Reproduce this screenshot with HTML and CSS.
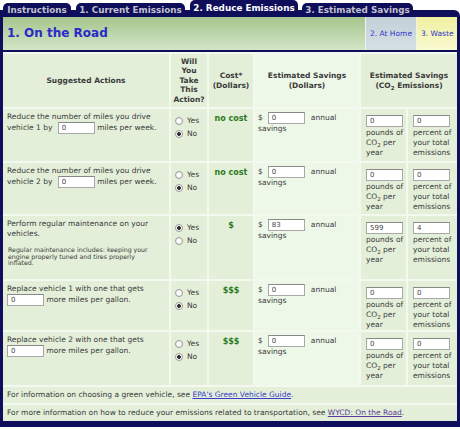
FILE: index.html
```html
<!DOCTYPE html>
<html>
<head>
<meta charset="utf-8">
<title>Reduce Emissions</title>
<link rel="stylesheet" href="styles.css">
</head>
<body>
<div class="calc">
  <div class="tabs">
    <div class="tab t1">Instructions</div>
    <div class="tab t2">1. Current Emissions</div>
    <div class="tab t3 active">2. Reduce Emissions</div>
    <div class="tab t4">3. Estimated Savings</div>
    <div class="tab-fill"></div>
  </div>
  <div class="frame">
    <div class="band">
      <h1 class="title">1. On the Road</h1>
      <a class="sub home">2. At Home</a>
      <a class="sub waste">3. Waste</a>
    </div>
    <div class="grid">
      <div class="c head"><span>Suggested Actions</span></div>
      <div class="c head"><span>Will<br>You<br>Take<br>This<br>Action?</span></div>
      <div class="c head"><span>Cost*<br>(Dollars)</span></div>
      <div class="c head sav"><span>Estimated Savings<br>(Dollars)</span></div>
      <div class="c head span2"><span>Estimated Savings<br>(CO<sub>2</sub> Emissions)</span></div>

      <div class="c act">Reduce the number of miles you drive vehicle 1 by <input class="num gap" value="0"> miles per week.</div>
      <div class="c radios"><label><input type="radio" name="r1"> Yes</label><label><input type="radio" name="r1" checked> No</label></div>
      <div class="c cost">no cost</div>
      <div class="c sav money">$<input class="num" value="0">annual savings</div>
      <div class="c co2"><input class="num" value="0"><span>pounds of<br>CO<sub>2</sub> per<br>year</span></div>
      <div class="c co2"><input class="num" value="0"><span>percent of<br>your total<br>emissions</span></div>

      <div class="c act">Reduce the number of miles you drive vehicle 2 by <input class="num gap" value="0"> miles per week.</div>
      <div class="c radios"><label><input type="radio" name="r2"> Yes</label><label><input type="radio" name="r2" checked> No</label></div>
      <div class="c cost">no cost</div>
      <div class="c sav money">$<input class="num" value="0">annual savings</div>
      <div class="c co2"><input class="num" value="0"><span>pounds of<br>CO<sub>2</sub> per<br>year</span></div>
      <div class="c co2"><input class="num" value="0"><span>percent of<br>your total<br>emissions</span></div>

      <div class="c act">Perform regular maintenance on your vehicles.<p class="note">Regular maintenance includes: keeping your engine properly tuned and tires properly inflated.</p></div>
      <div class="c radios"><label><input type="radio" name="r3" checked> Yes</label><label><input type="radio" name="r3"> No</label></div>
      <div class="c cost">$</div>
      <div class="c sav money">$<input class="num" value="83">annual savings</div>
      <div class="c co2"><input class="num" value="599"><span>pounds of<br>CO<sub>2</sub> per<br>year</span></div>
      <div class="c co2"><input class="num" value="4"><span>percent of<br>your total<br>emissions</span></div>

      <div class="c act">Replace vehicle 1 with one that gets <input class="num" value="0"> more miles per gallon.</div>
      <div class="c radios"><label><input type="radio" name="r4"> Yes</label><label><input type="radio" name="r4" checked> No</label></div>
      <div class="c cost">$$$</div>
      <div class="c sav money">$<input class="num" value="0">annual savings</div>
      <div class="c co2"><input class="num" value="0"><span>pounds of<br>CO<sub>2</sub> per<br>year</span></div>
      <div class="c co2"><input class="num" value="0"><span>percent of<br>your total<br>emissions</span></div>

      <div class="c act">Replace vehicle 2 with one that gets <input class="num" value="0"> more miles per gallon.</div>
      <div class="c radios"><label><input type="radio" name="r5"> Yes</label><label><input type="radio" name="r5" checked> No</label></div>
      <div class="c cost">$$$</div>
      <div class="c sav money">$<input class="num" value="0">annual savings</div>
      <div class="c co2"><input class="num" value="0"><span>pounds of<br>CO<sub>2</sub> per<br>year</span></div>
      <div class="c co2"><input class="num" value="0"><span>percent of<br>your total<br>emissions</span></div>

      <div class="c foot"><span>For information on choosing a green vehicle, see <a class="link">EPA's Green Vehicle Guide</a>.</span></div>
      <div class="c foot"><span>For more information on how to reduce your emissions related to transportation, see <a class="link visited">WYCD: On the Road</a>.</span></div>
    </div>
  </div>
</div>
</body>
</html>
```

FILE: styles.css
```css
* { box-sizing: border-box; }
body {
  margin: 0;
  background: #fff;
  font-family: "DejaVu Sans", Verdana, sans-serif;
  font-size: 7.5px;
  color: #3a3a3a;
}
.calc { width: 460px; }

/* tabs */
.tabs {
  display: flex;
  align-items: flex-end;
  height: 17px;
  padding-left: 3px;
  background: linear-gradient(to bottom, transparent 10px, #0e0e5a 10px) no-repeat;
  background-size: calc(100% - 8px) 100%;
}
.tab {
  height: 14px;
  background: #0e0e5a;
  color: #c2c2ce;
  font-weight: bold;
  font-size: 8.8px;
  line-height: 14px;
  text-align: center;
  border-radius: 5px 5px 0 0;
  white-space: nowrap;
}
.t1 { width: 68px; }
.t2 { width: 109px; margin-left: 5px; }
.t3 { width: 108px; margin-left: 5px; }
.t4 { width: 111px; margin-left: 4px; }
.tab.active { height: 17px; color: #fff; line-height: 16px; }
.tab-fill {
  flex: 1;
  height: 7px;
  margin-left: 4px;
  background: #0e0e5a;
  border-top-right-radius: 6px;
}

/* frame */
.frame {
  border: 3px solid #0e0e5a;
  border-top: 0;
  border-bottom-width: 6px;
}
.band {
  display: flex;
  height: 35px;
  background: linear-gradient(#a5c58d, #d3e5c7);
  border-bottom: 2px solid #0e0e5a;
}
.title {
  flex: 1;
  margin: 0;
  padding: 9px 0 0 4px;
  font-size: 12px;
  font-weight: bold;
  color: #2a2ac8;
}
.sub {
  padding: 12px 3px 0 4px;
  color: #3535c8;
  font-size: 7.5px;
  border-left: 1px solid #eef3ee;
}
.home { width: 51px; background: linear-gradient(#c2d0d8, #d6e0e4); }
.waste { width: 41px; background: linear-gradient(#f0f0a0, #fafad2); }

/* grid */
.grid {
  display: grid;
  grid-template-columns: 166px 36px 44px 104px 45px 49px;
  grid-template-rows: 53px 52px 51px 63px 49px 53px 16px 16px;
  gap: 2px;
  padding-top: 2px;
  background: #f4f9f0;
}
.c { background: #e3efd9; line-height: 10px; }
.c.sav { background: #eef8e8; }
.head {
  display: flex;
  align-items: center;
  justify-content: center;
  text-align: center;
  font-weight: bold;
  line-height: 9.5px;
}
.span2 { grid-column: span 2; }
sub { font-size: 5.5px; line-height: 0; vertical-align: -1.5px; }

.act { padding: 3px 4px; }
.note {
  margin: 8px 0 0 1px;
  max-width: 143px;
  font-size: 6.25px;
  line-height: 6.6px;
}
.radios {
  display: flex;
  flex-direction: column;
  gap: 3px;
  padding: 7px 0 0 4px;
}
.radios label { display: flex; align-items: center; gap: 4px; height: 10px; }
input[type=radio] {
  appearance: none;
  margin: 0;
  width: 8px;
  height: 8px;
  border: 1px solid #9a9a9a;
  border-radius: 50%;
  background: radial-gradient(circle, #fff 40%, #e4e4e4);
}
input[type=radio]:checked {
  background: radial-gradient(circle, #333 0 1.6px, #fff 2.2px 60%, #e4e4e4);
}
.cost {
  padding-top: 5px;
  text-align: center;
  font-weight: bold;
  font-size: 8px;
  color: #2c7a22;
}
.money { padding: 3px 3px; }
.money .num { margin: 0 6px 0 5px; }
.co2 { padding: 6px 0 0 5px; }
.co2 span { display: block; padding-top: 1px; white-space: nowrap; }

.num {
  width: 37px;
  height: 12px;
  margin: 0;
  padding: 0 3px;
  border: 1px solid #a8a8a8;
  border-top-color: #888;
  background: #fff;
  font-family: inherit;
  font-size: 7px;
  color: #444;
  vertical-align: middle;
}
.gap { margin-left: 3px; }
.foot {
  grid-column: 1 / -1;
  display: flex;
  align-items: center;
  padding-left: 4px;
}
.link { color: #3a3ac8; text-decoration: underline; }
.link.visited { color: #5a3a96; }
```
